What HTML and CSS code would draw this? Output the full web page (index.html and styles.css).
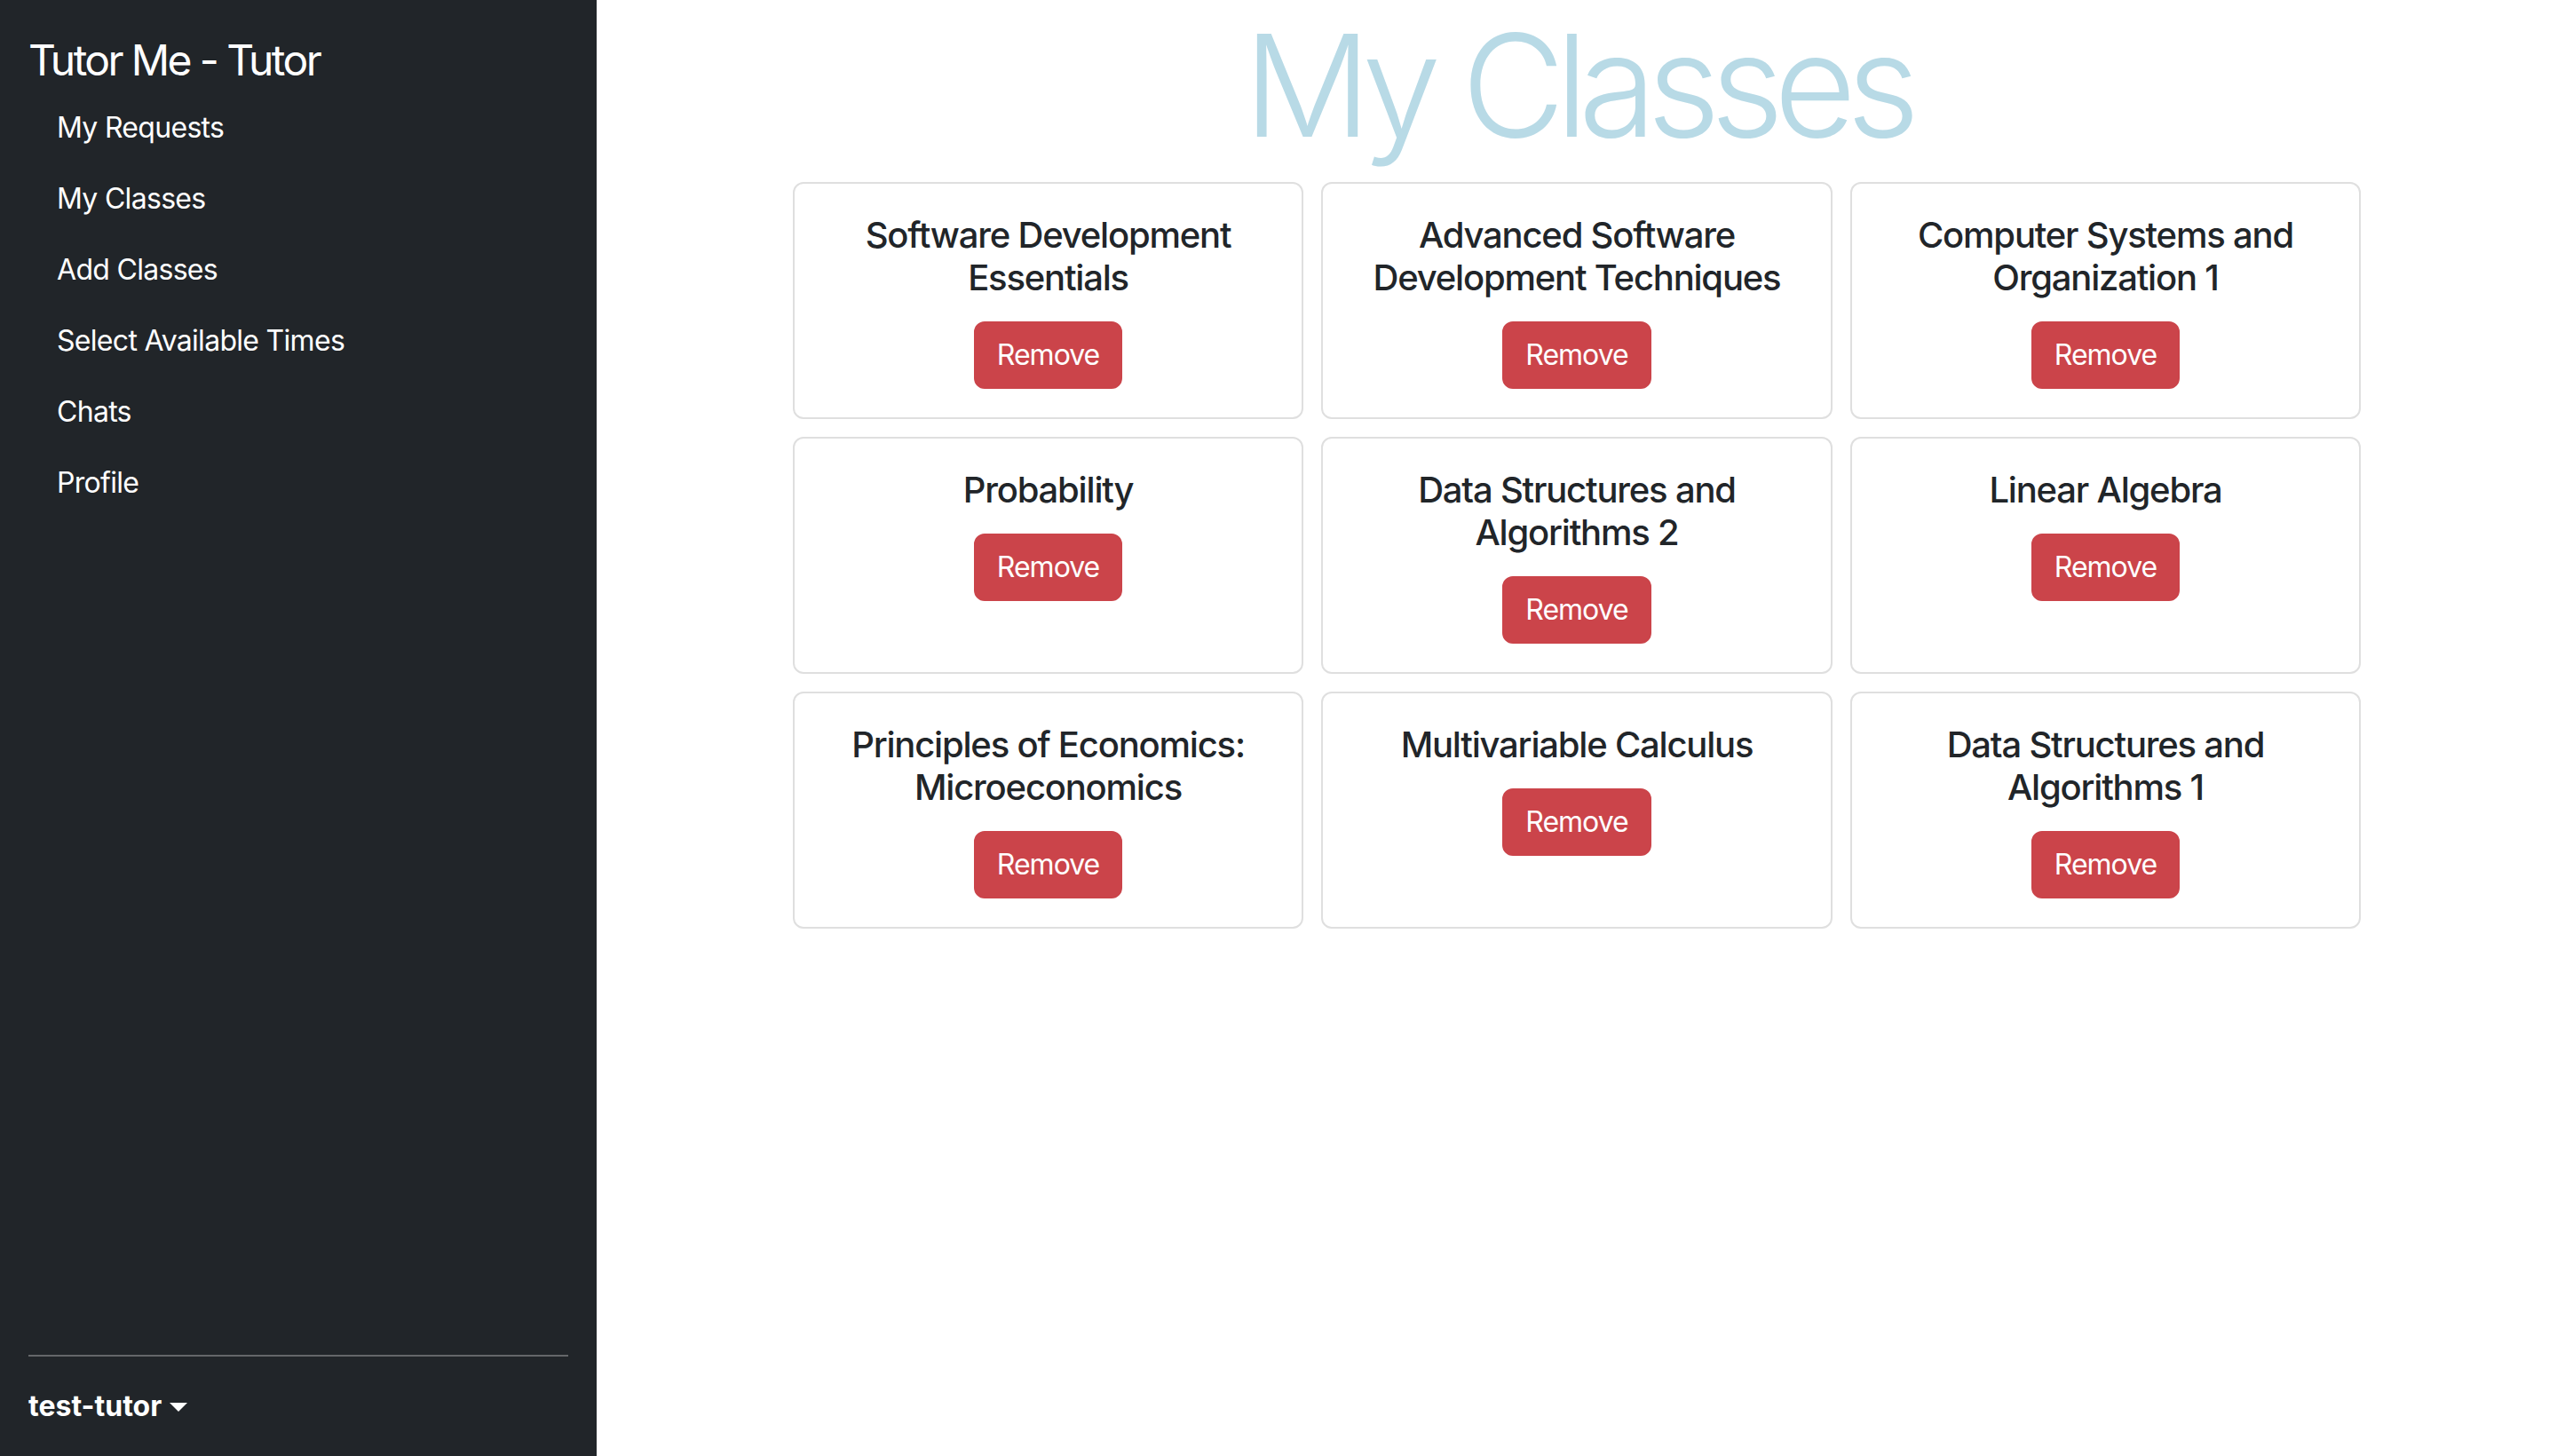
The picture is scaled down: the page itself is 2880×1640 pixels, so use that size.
FILE: index.html
```html
<!DOCTYPE html>
<html lang="en">
<head>
<meta charset="utf-8">
<title>Tutor Me - Tutor</title>
<link rel="stylesheet" href="styles.css">
</head>
<body>
<aside class="sidebar">
  <a class="brand" href="#">Tutor Me - Tutor</a>
  <ul class="nav">
    <li><a class="nav-link" href="#">My Requests</a></li>
    <li><a class="nav-link" href="#">My Classes</a></li>
    <li><a class="nav-link" href="#">Add Classes</a></li>
    <li><a class="nav-link" href="#">Select Available Times</a></li>
    <li><a class="nav-link" href="#">Chats</a></li>
    <li><a class="nav-link" href="#">Profile</a></li>
  </ul>
  <hr class="divider">
  <div class="user"><strong>test-tutor</strong><span class="caret"></span></div>
</aside>
<main class="main">
  <h1 class="heading">My Classes</h1>
  <div class="grid">
    <div class="card"><h5 class="card-title">Software Development Essentials</h5><button class="btn">Remove</button></div>
    <div class="card"><h5 class="card-title">Advanced Software Development Techniques</h5><button class="btn">Remove</button></div>
    <div class="card"><h5 class="card-title">Computer Systems and Organization 1</h5><button class="btn">Remove</button></div>
    <div class="card"><h5 class="card-title">Probability</h5><button class="btn">Remove</button></div>
    <div class="card"><h5 class="card-title">Data Structures and Algorithms 2</h5><button class="btn">Remove</button></div>
    <div class="card"><h5 class="card-title">Linear Algebra</h5><button class="btn">Remove</button></div>
    <div class="card"><h5 class="card-title">Principles of Economics: Microeconomics</h5><button class="btn">Remove</button></div>
    <div class="card"><h5 class="card-title">Multivariable Calculus</h5><button class="btn">Remove</button></div>
    <div class="card"><h5 class="card-title">Data Structures and Algorithms 1</h5><button class="btn">Remove</button></div>
  </div>
</main>
</body>
</html>
```
FILE: styles.css
```css
* { box-sizing: border-box; }
html, body { height: 100%; }
body {
  margin: 0;
  display: flex;
  font-family: Inter, "Noto Sans", "Liberation Sans", sans-serif;
  color: #212529;
  background: #fff;
  font-size: 32px;
  line-height: 48px;
}
.sidebar {
  width: 672px;
  flex-shrink: 0;
  height: 100vh;
  background: #212529;
  color: #fff;
  padding: 32px;
  display: flex;
  flex-direction: column;
}
.brand {
  color: #fff;
  text-decoration: none;
  font-size: 48px;
  line-height: 72px;
  letter-spacing: -2.6px;
}
.nav {
  list-style: none;
  margin: 0 0 auto 0;
  padding: 0;
  display: flex;
  flex-direction: column;
}
.nav-link {
  display: block;
  padding: 16px 32px;
  color: #fff;
  text-decoration: none;
  font-size: 32px;
  line-height: 48px;
  letter-spacing: -0.7px;
}
.divider {
  margin: 32px 0;
  border: 0;
  border-top: 2px solid rgba(255,255,255,0.3);
}
.user {
  display: flex;
  align-items: center;
  font-size: 32px;
  line-height: 48px;
  letter-spacing: 0;
}
.user strong { font-weight: 700; }
.caret {
  display: inline-block;
  margin-left: 9px;
  width: 0;
  height: 0;
  border-top: 10px solid #fff;
  border-left: 10px solid transparent;
  border-right: 10px solid transparent;
  margin-top: 2px;
}
.main {
  flex: 1;
  text-align: center;
}
.heading {
  margin: 0 0 13px 0;
  font-size: 160px;
  line-height: 192px;
  font-weight: 300;
  color: #b8dae6;
  letter-spacing: -11px;
}
.grid {
  width: 80%;
  margin: 0 auto;
  display: grid;
  grid-template-columns: repeat(3, 1fr);
  gap: 20px;
}
.card {
  border: 2px solid #dfdfdf;
  border-radius: 12px;
  padding: 34px 32px 32px;
  display: flex;
  flex-direction: column;
  align-items: center;
}
.card-title {
  margin: 0 0 25px 0;
  font-size: 40px;
  line-height: 48px;
  font-weight: 500;
  letter-spacing: -1.2px;
}
.btn {
  font-family: inherit;
  font-size: 32px;
  line-height: 48px;
  padding: 12px 24px;
  color: #fff;
  background: #cb444a;
  border: 2px solid #cb444a;
  border-radius: 12px;
  letter-spacing: -1px;
}
```
